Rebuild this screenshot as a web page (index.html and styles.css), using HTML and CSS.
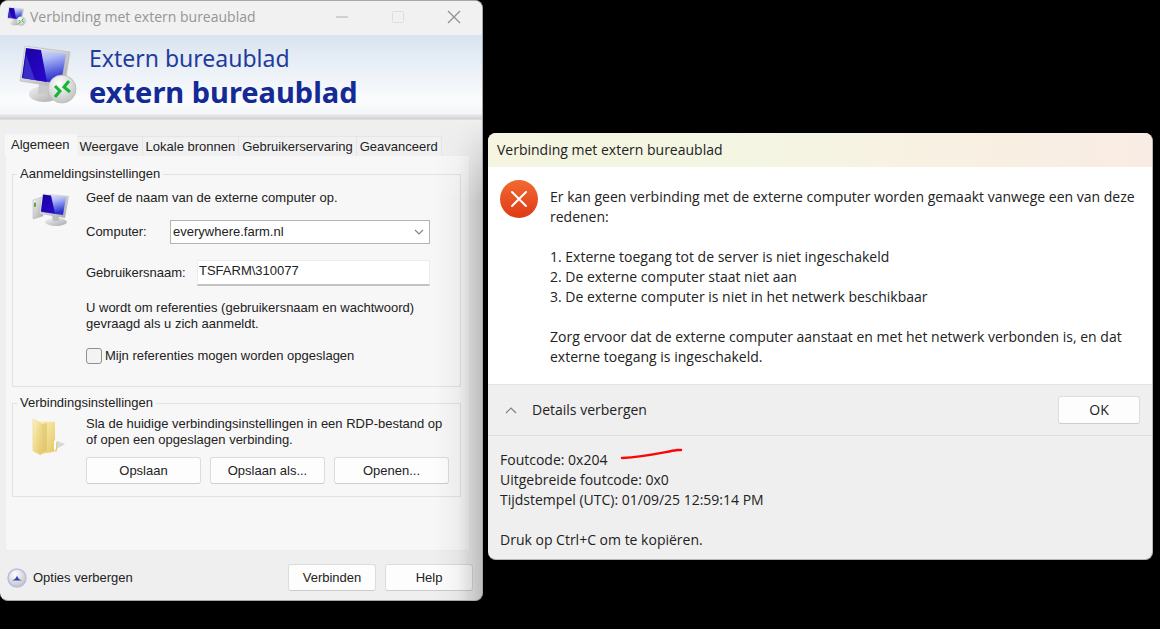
FILE: index.html
```html
<!DOCTYPE html>
<html lang="nl">
<head>
<meta charset="utf-8">
<title>Verbinding met extern bureaublad</title>
<link rel="stylesheet" href="styles.css">
</head>
<body>
<svg class="defs" aria-hidden="true">
  <defs>
    <linearGradient id="screen" x1="0" y1="0" x2="0.3" y2="1"><stop offset="0" stop-color="#e6edff"/><stop offset=".4" stop-color="#b0bdf8"/><stop offset="1" stop-color="#2a2fd0"/></linearGradient>
    <linearGradient id="deep" x1="0" y1="0" x2="1" y2="1"><stop offset="0" stop-color="#1a00a0"/><stop offset="1" stop-color="#2a08cc"/></linearGradient>
    <linearGradient id="metal" x1="0" y1="0" x2="1" y2="1"><stop offset="0" stop-color="#f4f4f4"/><stop offset="1" stop-color="#a9a9ab"/></linearGradient>
    <radialGradient id="orb" cx=".4" cy=".3" r=".8"><stop offset="0" stop-color="#ffffff"/><stop offset="1" stop-color="#bcbcbc"/></radialGradient>
    <linearGradient id="folder" x1="0" y1="0" x2="1" y2="1"><stop offset="0" stop-color="#fdf3bd"/><stop offset="1" stop-color="#e4c45c"/></linearGradient>
    <linearGradient id="alert" x1="0" y1="0" x2="0" y2="1"><stop offset="0" stop-color="#f26a32"/><stop offset="1" stop-color="#df3a16"/></linearGradient>
    <symbol id="remote" viewBox="0 0 58 58">
      <ellipse cx="25" cy="48" rx="15" ry="8" fill="url(#metal)"/>
      <path d="M20 38l14 2 1 8H19z" fill="#c9c9cb"/>
      <path d="M6 0l45 6-6 36-44-7z" fill="url(#metal)" stroke="#b5b5b8" stroke-width=".6"/>
      <path d="M7 2l40 6-5 30-39-6z" fill="url(#screen)"/>
      <path d="M7 2l15 2 6 32-25-4z" fill="url(#deep)"/>
      <path d="M7 8l9 26-12-2z" fill="#4a48d8" opacity=".6"/>
      <circle cx="43" cy="43" r="14" fill="url(#orb)" stroke="#b4b4b4" stroke-width=".7"/>
      <path d="M36 40l5 5-5 6M50 35l-5 6 6 5" fill="none" stroke="#12b834" stroke-width="3"/>
    </symbol>
    <symbol id="pc" viewBox="0 0 38 34">
      <path d="M1 7l9-3 1 19-10 3z" fill="url(#metal)" stroke="#b0b0b0" stroke-width=".5"/>
      <path d="M2 10l2-.5v4l-2 .5z" fill="#49ad45"/>
      <ellipse cx="24" cy="29" rx="11" ry="4" fill="url(#metal)"/>
      <path d="M20 22l7 1v5h-6z" fill="#bdbdbf"/>
      <path d="M10 0l27 3-4 22-25-4z" fill="url(#metal)"/>
      <path d="M11 1.500l23 2.500-3 18-22-3z" fill="url(#screen)"/>
      <path d="M11 1.500l8 1 4 18-14-2z" fill="url(#deep)"/>
    </symbol>
  </defs>
</svg>
<main class="desktop">
  <section class="window rdp">
    <header class="titlebar">
      <svg class="title-icon" aria-hidden="true"><use href="#remote"/></svg>
      <span class="title">Verbinding met extern bureaublad</span>
      <button class="caption" type="button" aria-label="Minimaliseren"><svg viewBox="0 0 14 14"><path d="M1 7h12" stroke="#b0b0b0"/></svg></button>
      <button class="caption" type="button" aria-label="Maximaliseren" disabled><svg viewBox="0 0 14 14"><rect x="1.500" y="1.500" width="11" height="11" rx="1" fill="none" stroke="#dedede"/></svg></button>
      <button class="caption" type="button" aria-label="Sluiten"><svg viewBox="0 0 14 14"><path d="M1 1l12 12M13 1L1 13" stroke="#8f8f8f" stroke-width="1.200"/></svg></button>
    </header>
    <div class="banner">
      <svg class="banner-icon" aria-hidden="true"><use href="#remote"/></svg>
      <h1 class="banner-text"><span>Extern bureaublad</span><strong>extern bureaublad</strong></h1>
    </div>
    <form class="form">
      <div class="tabs" role="tablist">
        <button class="tab active" type="button" role="tab" aria-selected="true">Algemeen</button>
        <button class="tab" type="button" role="tab">Weergave</button>
        <button class="tab" type="button" role="tab">Lokale bronnen</button>
        <button class="tab" type="button" role="tab">Gebruikerservaring</button>
        <button class="tab" type="button" role="tab">Geavanceerd</button>
      </div>
      <div class="panel" role="tabpanel">
        <fieldset class="group">
          <legend>Aanmeldingsinstellingen</legend>
          <div class="group-body login">
            <svg class="pc-icon" aria-hidden="true"><use href="#pc"/></svg>
            <div class="fields">
              <p>Geef de naam van de externe computer op.</p>
              <div class="row computer">
                <label for="computer">Computer:</label>
                <div class="combo">
                  <select id="computer"><option>everywhere.farm.nl</option></select>
                  <svg class="combo-arrow" viewBox="0 0 10 6" aria-hidden="true"><path d="M1 1l4 4 4-4" fill="none" stroke="#858585" stroke-width="1.200"/></svg>
                </div>
              </div>
              <div class="row user">
                <label for="user">Gebruikersnaam:</label>
                <input id="user" type="text" value="TSFARM\310077">
              </div>
              <p class="hint">U wordt om referenties (gebruikersnaam en wachtwoord)<br>gevraagd als u zich aanmeldt.</p>
              <label class="check"><input type="checkbox">Mijn referenties mogen worden opgeslagen</label>
            </div>
          </div>
        </fieldset>
        <fieldset class="group">
          <legend>Verbindingsinstellingen</legend>
          <div class="group-body saving">
            <svg class="folder-icon" viewBox="0 0 34 37" aria-hidden="true">
              <path d="M18 34l15-9-8-3-8 10z" fill="#b9b9b9" opacity=".5"/>
              <path d="M7 2l16 1v20l2 1v8l-16 3z" fill="url(#folder)"/>
              <path d="M10 5l5-1v27l-6 4z" fill="#dcbd64" opacity=".6"/>
              <path d="M1 0l9 5v10l-1 2v19l-8-4z" fill="url(#folder)" stroke="#ead58b" stroke-width=".6"/>
              <path d="M22 22l2-1v9l-2 2z" fill="#fff"/>
            </svg>
            <div class="fields">
              <p>Sla de huidige verbindingsinstellingen in een RDP-bestand op<br>of open een opgeslagen verbinding.</p>
              <div class="actions">
                <button class="btn" type="button">Opslaan</button>
                <button class="btn" type="button">Opslaan als...</button>
                <button class="btn" type="button">Openen...</button>
              </div>
            </div>
          </div>
        </fieldset>
      </div>
      <footer class="footer">
        <button class="toggle" type="button">
          <svg viewBox="0 0 20 20" aria-hidden="true"><circle cx="10" cy="10" r="9" fill="url(#orb)" stroke="#b9bde6" stroke-width="1.500"/><path d="M5 12.500q4-1 5-5 1 4 5 5z" fill="#2b3ec0"/></svg>
          Opties verbergen
        </button>
        <button class="btn" type="submit">Verbinden</button>
        <button class="btn" type="button">Help</button>
      </footer>
    </form>
  </section>

  <section class="window error" role="alertdialog" aria-labelledby="error-title">
    <header class="error-title" id="error-title">Verbinding met extern bureaublad</header>
    <div class="message">
      <svg class="error-icon" viewBox="0 0 38 38" aria-hidden="true"><circle cx="19" cy="19" r="19" fill="url(#alert)"/><path d="M12 12l14 14M26 12L12 26" stroke="#fff" stroke-width="2" stroke-linecap="round"/></svg>
      <div class="message-text">
        <p>Er kan geen verbinding met de externe computer worden gemaakt vanwege een van deze redenen:</p>
        <ol>
          <li>1. Externe toegang tot de server is niet ingeschakeld</li>
          <li>2. De externe computer staat niet aan</li>
          <li>3. De externe computer is niet in het netwerk beschikbaar</li>
        </ol>
        <p>Zorg ervoor dat de externe computer aanstaat en met het netwerk verbonden is, en dat<br>externe toegang is ingeschakeld.</p>
      </div>
    </div>
    <div class="command">
      <button class="expander" type="button" aria-expanded="true">
        <svg viewBox="0 0 12 7" aria-hidden="true"><path d="M1 6l5-5 5 5" fill="none" stroke="#808080" stroke-width="1.200"/></svg>
        Details verbergen
      </button>
      <button class="btn ok" type="button">OK</button>
    </div>
    <div class="details">
      <p>Foutcode: 0x204</p>
      <p>Uitgebreide foutcode: 0x0</p>
      <p>Tijdstempel (UTC): 01/09/25 12:59:14 PM</p>
      <p class="copy">Druk op Ctrl+C om te kopiëren.</p>
      <svg class="pen" viewBox="0 0 64 12" aria-hidden="true"><path d="M2 10C24 9 40 5 57 2h4" fill="none" stroke="#fb0508" stroke-width="2.400" stroke-linecap="round"/></svg>
    </div>
  </section>
</main>
</body>
</html>
```

FILE: styles.css
```css
* { box-sizing: border-box; }
body {
  margin: 0;
  background: #000;
  color: #222;
  font: 13px/16px "Liberation Sans", Arial, sans-serif;
}
p, h1, ol { margin: 0; padding: 0; }
button, input, select { font: inherit; color: inherit; margin: 0; }
svg { display: block; flex: none; }
.defs { position: absolute; width: 0; height: 0; }

.desktop {
  display: grid;
  grid-template-columns: 483fr 665fr;
  gap: 5px;
  align-items: start;
  padding-right: 7px;
}
.window {
  position: relative;
  border-radius: 8px;
  overflow: hidden;
  background: #efefef;
}
.rdp { border: 1px solid #a8a8a8; border-left: 0; }
.rdp::after {
  content: "";
  position: absolute;
  top: 120px;
  right: 0;
  bottom: 0;
  width: 48px;
  background: linear-gradient(to right, transparent, rgba(0, 0, 0, .04) 50%, rgba(0, 0, 0, .2));
  mask-image: linear-gradient(transparent, #000 80px);
  pointer-events: none;
}

.titlebar {
  display: flex;
  align-items: center;
  height: 34px;
  padding: 0 0 3px 7px;
  background: #f1f1f1;
  color: #959595;
}
.title-icon { width: 19px; height: 19px; margin-right: 4px; }
.title { flex: 1; font: 14px/20px "Open Sans", "Noto Sans", sans-serif; }
.caption {
  width: 56px;
  padding: 0 21px;
  border: 0;
  background: none;
}
.caption svg { width: 14px; height: 14px; }

.banner {
  display: flex;
  align-items: center;
  gap: 12px;
  height: 85px;
  padding: 0 19px 5px;
  background: linear-gradient(#d9e4f0, #fbfcfd 66px, #f2f6fa 79px, #e5e5e5 80px, #e0e0e0 82px, #cdcdcd 84px, #efefef);
}
.banner-icon { width: 58px; height: 58px; }
.banner-text {
  display: flex;
  flex-direction: column;
  color: #1f3c9c;
  font: 23px/33px "Noto Sans", sans-serif;
}
.banner-text strong { color: #142a94; font-size: 29px; }

.form { padding: 14px 9px 9px 5px; }
.tabs { display: flex; align-items: flex-end; height: 22px; }
.tab {
  height: 20px;
  padding: 0 3px;
  border: 1px solid #e6e6e6;
  border-width: 1px 1px 0 0;
  background: #f1f1f1;
  white-space: nowrap;
}
.tab.active { height: 22px; padding: 0 6px 2px; border-color: #f7f7f7; background: #f7f7f7; }
.panel {
  display: flex;
  flex-direction: column;
  gap: 8px;
  margin-right: 3px;
  padding: 9px 8px 53px 6px;
  border: 1px solid #ececec;
  border-top-color: #f7f7f7;
  background: #f7f7f7;
}
.group {
  min-width: 0;
  margin: 0;
  padding: 0;
  border: 1px solid #e2e2e2;
}
.group legend { margin-left: 4px; padding: 0 3px; }
.group-body { display: grid; grid-template-columns: 38px 1fr; column-gap: 16px; }
.login { padding: 8px 30px 22px 19px; }
.saving { padding: 5px 11px 12px 19px; }
.pc-icon { width: 38px; height: 34px; margin-top: 3px; }
.folder-icon { width: 34px; height: 37px; margin-top: 3px; }
.fields { display: flex; flex-direction: column; }
.row { display: grid; align-items: center; }
.computer { grid-template-columns: 84px 1fr; margin-top: 14px; }
.user { grid-template-columns: 111px 1fr; margin-top: 16px; }
.combo { position: relative; }
.combo select {
  display: block;
  appearance: none;
  width: 100%;
  height: 24px;
  padding: 0 24px 0 2px;
  border: 1px solid #b4b4b4;
  border-radius: 0;
  background: #fff;
}
.combo-arrow { position: absolute; right: 6px; top: 9px; width: 10px; height: 6px; }
.user input {
  width: 100%;
  height: 26px;
  padding: 0 1px 4px;
  border: 1px solid #ececec;
  border-bottom: 2px solid #c2c2c2;
  background: #fff;
}
.hint { margin-top: 14px; }
.check { display: flex; align-items: center; gap: 3px; margin-top: 16px; }
.check input {
  appearance: none;
  width: 16px;
  height: 16px;
  border: 1px solid #8f8f8f;
  border-radius: 3px;
  background: #f3f3f3;
}
.actions { display: grid; grid-template-columns: repeat(3, 1fr); gap: 9px; margin-top: 9px; }
.btn {
  height: 27px;
  padding: 0;
  border: 1px solid #dcdcdc;
  border-bottom-color: #cdcdcd;
  border-radius: 3px;
  background: #fdfdfd;
}
.footer {
  display: grid;
  grid-template-columns: 1fr 88px 88px;
  gap: 9px;
  align-items: center;
  padding: 13px 0 0 2px;
}
.toggle {
  display: flex;
  align-items: center;
  gap: 6px;
  padding: 0;
  border: 0;
  background: none;
}
.toggle svg { width: 20px; height: 20px; }

.error {
  margin-top: 133px;
  border: 1px solid #b5b5b5;
  border-width: 0 1px 1px 0;
  font: 14px/20px "Open Sans", "Noto Sans", sans-serif;
}
.error-title {
  padding: 7px 9px;
  background: linear-gradient(to right, #f5f5e1, #f3f6e2 35%, #f8f1e2 65%, #f9ece4);
}
.message {
  display: flex;
  gap: 12px;
  padding: 13px 12px 17px;
  background: #fff;
}
.error-icon { width: 38px; height: 38px; }
.message-text { display: flex; flex-direction: column; gap: 20px; padding-top: 7px; }
.message-text ol { list-style: none; }
.command {
  display: flex;
  align-items: center;
  justify-content: space-between;
  padding: 11px 12px 11px 17px;
  border-top: 1px solid #e4e4e4;
  border-bottom: 1px solid #dedede;
}
.expander {
  display: flex;
  align-items: center;
  gap: 15px;
  padding: 0;
  border: 0;
  background: none;
}
.expander svg { width: 12px; height: 7px; }
.ok { width: 82px; height: 28px; }
.details { position: relative; padding: 14px 12px 9px; }
.copy { margin-top: 20px; }
.pen { position: absolute; left: 132px; top: 12px; width: 64px; height: 12px; }
```
